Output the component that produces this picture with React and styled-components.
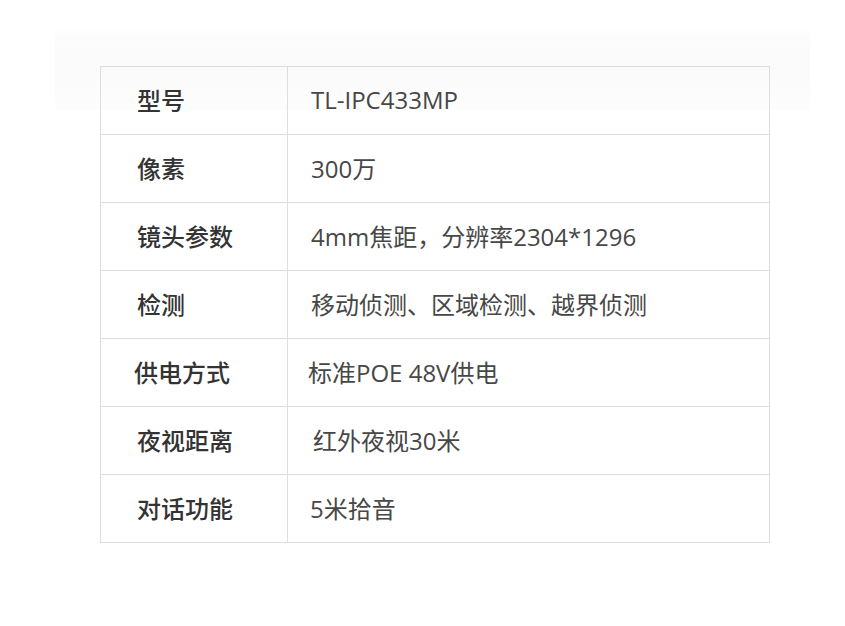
import React from 'react';
import styled, { createGlobalStyle } from 'styled-components';

const GlobalStyle = createGlobalStyle`
  html, body {
    margin: 0;
    padding: 0;
    background: #fff;
  }
  body {
    font-family: "Open Sans", "Noto Sans CJK SC", sans-serif;
  }
`;

const Page = styled.div`
  width: 845px;
  height: 626px;
  box-sizing: border-box;
  padding: 66px 0 0 100px;
  background-color: #fff;
  background-image: linear-gradient(
    to bottom,
    rgba(0, 0, 0, 0.008) 0%,
    rgba(0, 0, 0, 0.02) 40%,
    rgba(0, 0, 0, 0.006) 100%
  );
  background-size: 755px 80px;
  background-position: 55px 30px;
  background-repeat: no-repeat;
`;

const SpecTable = styled.table`
  width: 670px;
  border-collapse: collapse;
  table-layout: fixed;
`;

const LabelCol = styled.col`
  width: 187px;
`;

const Row = styled.tr`
  height: 68px;
`;

const Label = styled.th`
  border: 1px solid #dedede;
  padding: 0 0 3px ${(p) => 36 + (p.$shift || 0)}px;
  text-align: left;
  font-family: "Noto Sans CJK SC", sans-serif;
  font-size: 24px;
  font-weight: 500;
  color: #333;
`;

const Value = styled.td`
  border: 1px solid #dedede;
  padding: 0 0 3px ${(p) => 23 + (p.$shift || 0)}px;
  font-size: 24px;
  font-weight: 400;
  color: #474747;
  white-space: nowrap;
`;

const specs = [
  { label: '型号', value: 'TL-IPC433MP' },
  { label: '像素', value: '300万' },
  { label: '镜头参数', value: '4mm焦距，分辨率2304*1296' },
  { label: '检测', value: '移动侦测、区域检测、越界侦测' },
  { label: '供电方式', value: '标准POE 48V供电', labelShift: -3, valueShift: -3 },
  { label: '夜视距离', value: '红外夜视30米', valueShift: 2 },
  { label: '对话功能', value: '5米拾音', valueShift: -1 },
];

const App = () => (
  <>
    <GlobalStyle />
    <Page>
      <SpecTable>
        <colgroup>
          <LabelCol />
          <col />
        </colgroup>
        <tbody>
          {specs.map((s) => (
            <Row key={s.label}>
              <Label $shift={s.labelShift}>{s.label}</Label>
              <Value $shift={s.valueShift}>{s.value}</Value>
            </Row>
          ))}
        </tbody>
      </SpecTable>
    </Page>
  </>
);

export default App;
